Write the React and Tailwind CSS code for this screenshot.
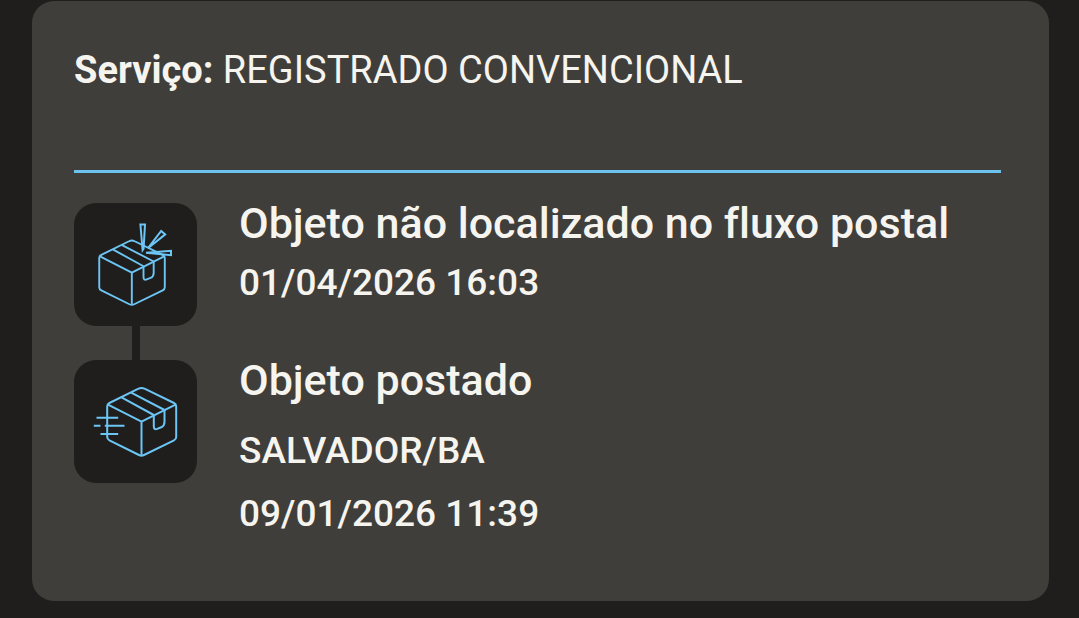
const events = [
  {
    id: "lost",
    title: "Objeto não localizado no fluxo postal",
    date: "01/04/2026 16:03",
    icon: LostBoxIcon,
  },
  {
    id: "posted",
    title: "Objeto postado",
    place: "SALVADOR/BA",
    date: "09/01/2026 11:39",
    icon: PostedBoxIcon,
  },
];

function Box() {
  return (
    <>
      <path d="M64.5 28.7q3-1.6 6 0L100 43q2.2 1 2.2 3.4V77q0 2.2-2.2 3.3L70 95q-2.5 1.3-5 0L35.4 80.3q-2.2-1.1-2.2-3.3V46.4q0-2.4 2.2-3.4z" />
      <path d="M34 44.6l33.5 17.1 34-17.1M67.5 61.7v34" />
      <path d="M47.5 37.3L79.8 55M57.2 32.7L90.5 50" />
      <path d="M79.8 55.5v11q0 3.5 3.4 2.4l4-1.6q3.3-1.5 3.3-5.3V50" />
    </>
  );
}

function LostBoxIcon() {
  return (
    <svg viewBox="0 0 123 123" className="size-full" fill="none" stroke="currentColor" strokeWidth="2" strokeLinejoin="round" aria-hidden="true">
      <g transform="translate(-6.3 11) scale(.95)">
        <Box />
      </g>
      <g strokeLinejoin="miter" strokeWidth="2">
        <path d="M66.4 21.6h4.6l-1.4 24-1 1.5z" />
        <path d="M87.2 28l4 3.4L74 45.2z" />
        <path d="M97 47.8v4.4l-25-2.4z" />
      </g>
    </svg>
  );
}

function PostedBoxIcon() {
  return (
    <svg viewBox="0 0 123 123" className="size-full" fill="none" stroke="currentColor" strokeWidth="2" strokeLinejoin="round" aria-hidden="true">
      <Box />
      <path d="M22.5 57.7h21.7M19.8 65.7h6.7M30.8 65.7h19.7M26.5 74h17.7" />
    </svg>
  );
}

function TrackingEvent({ event, last }) {
  const Icon = event.icon;

  return (
    <li className="flex gap-[42px]">
      <div className="flex shrink-0 flex-col items-center">
        <div className="size-[123px] rounded-[22px] bg-[#1f1e1c] text-[#6cc5f4]">
          <Icon />
        </div>
        {last ? null : <div className="min-h-[34px] w-2 grow bg-[#1f1e1c]" />}
      </div>
      <div className="min-w-0 font-medium">
        <h2 className="text-[43px] leading-10">{event.title}</h2>
        {event.place ? (
          <>
            <p className="mt-[31px] text-[37px] leading-10">{event.place}</p>
            <p className="mt-[23px] text-[37px] leading-10">{event.date}</p>
          </>
        ) : (
          <p className="mt-5 text-[37px] leading-10">{event.date}</p>
        )}
      </div>
    </li>
  );
}

export default function App() {
  return (
    <main className="min-h-screen bg-[#1f1e1c] pt-px pr-[30px] pb-4 pl-8 font-['Roboto',sans-serif] text-[#f6f4ef] [font-variant-ligatures:none]">
      <section className="rounded-[22px] bg-[#403e3a] pt-[49px] pr-12 pb-[67px] pl-[42px]">
        <p className="text-[38px] leading-10">
          <strong className="font-bold">Serviço:</strong>{" "}
          REGISTRADO CONVENCIONAL
        </p>
        <hr className="mt-20 mb-[30px] h-[3px] border-0 bg-[#6cc1ee]" />
        <ol>
          {events.map((event, index) => (
            <TrackingEvent
              key={event.id}
              event={event}
              last={index === events.length - 1}
            />
          ))}
        </ol>
      </section>
    </main>
  );
}
